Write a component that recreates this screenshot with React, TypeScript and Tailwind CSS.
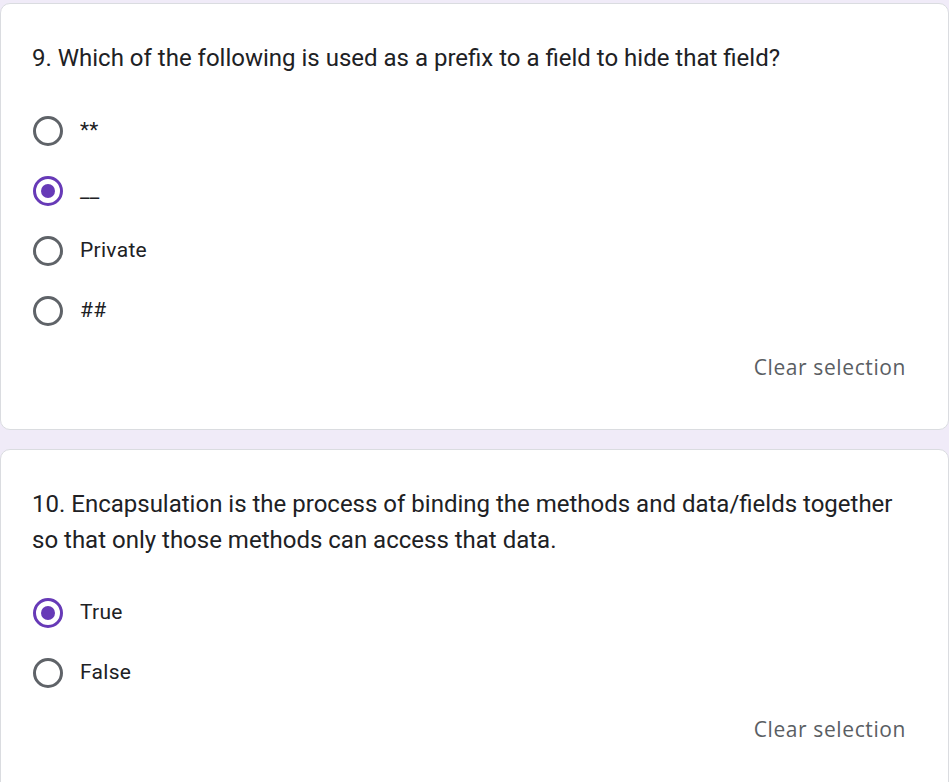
import React, { useState } from 'react';

type Question = {
  id: number;
  title: string;
  options: string[];
  selected: number;
};

const preguntas: Question[] = [
  {
    id: 9,
    title: '9. Which of the following is used as a prefix to a field to hide that field?',
    options: ['**', '__', 'Private', '##'],
    selected: 1,
  },
  {
    id: 10,
    title:
      '10. Encapsulation is the process of binding the methods and data/fields together so that only those methods can access that data.',
    options: ['True', 'False'],
    selected: 0,
  },
];

function Radio({ checked }: { checked: boolean }) {
  return (
    <span
      className={`flex h-[30px] w-[30px] shrink-0 items-center justify-center rounded-full border-[3px] ${
        checked ? 'border-[#673ab7]' : 'border-[#5f6368]'
      }`}
    >
      {checked && <span className="h-[14px] w-[14px] rounded-full bg-[#673ab7]" />}
    </span>
  );
}

function QuestionCard({ q }: { q: Question }) {
  const [sel, setSel] = useState<number | null>(q.selected);

  return (
    <div className="rounded-[10px] border border-[#dadce0] bg-white px-[31px] pt-[36px] pb-[41px]">
      <div className="text-[24px] leading-[36px] text-[#202124]">{q.title}</div>

      <div className="mt-[25px] flex flex-col">
        {q.options.map((opt, i) => (
          <label
            key={opt}
            onClick={() => setSel(i)}
            className="flex h-[60px] cursor-pointer items-center gap-[17px] pl-[1px]"
          >
            <Radio checked={sel === i} />
            <span className="text-[21px] tracking-[0.3px] text-[#202124]">{opt}</span>
          </label>
        ))}
      </div>

      <div className="mt-[7px] flex h-[40px] items-center justify-end">
        <button
          onClick={() => setSel(null)}
          className="px-[11px] font-['Open_Sans',sans-serif] text-[21px] font-medium tracking-[0.6px] text-[#5a5e63]"
        >
          Clear selection
        </button>
      </div>
    </div>
  );
}

export default function App() {
  return (
    <div className="min-h-screen bg-[#f0ebf8] pt-[3px] font-['Roboto',sans-serif]">
      <div className="flex flex-col gap-[19px]">
        {preguntas.map((q) => (
          <QuestionCard key={q.id} q={q} />
        ))}
      </div>
    </div>
  );
}
